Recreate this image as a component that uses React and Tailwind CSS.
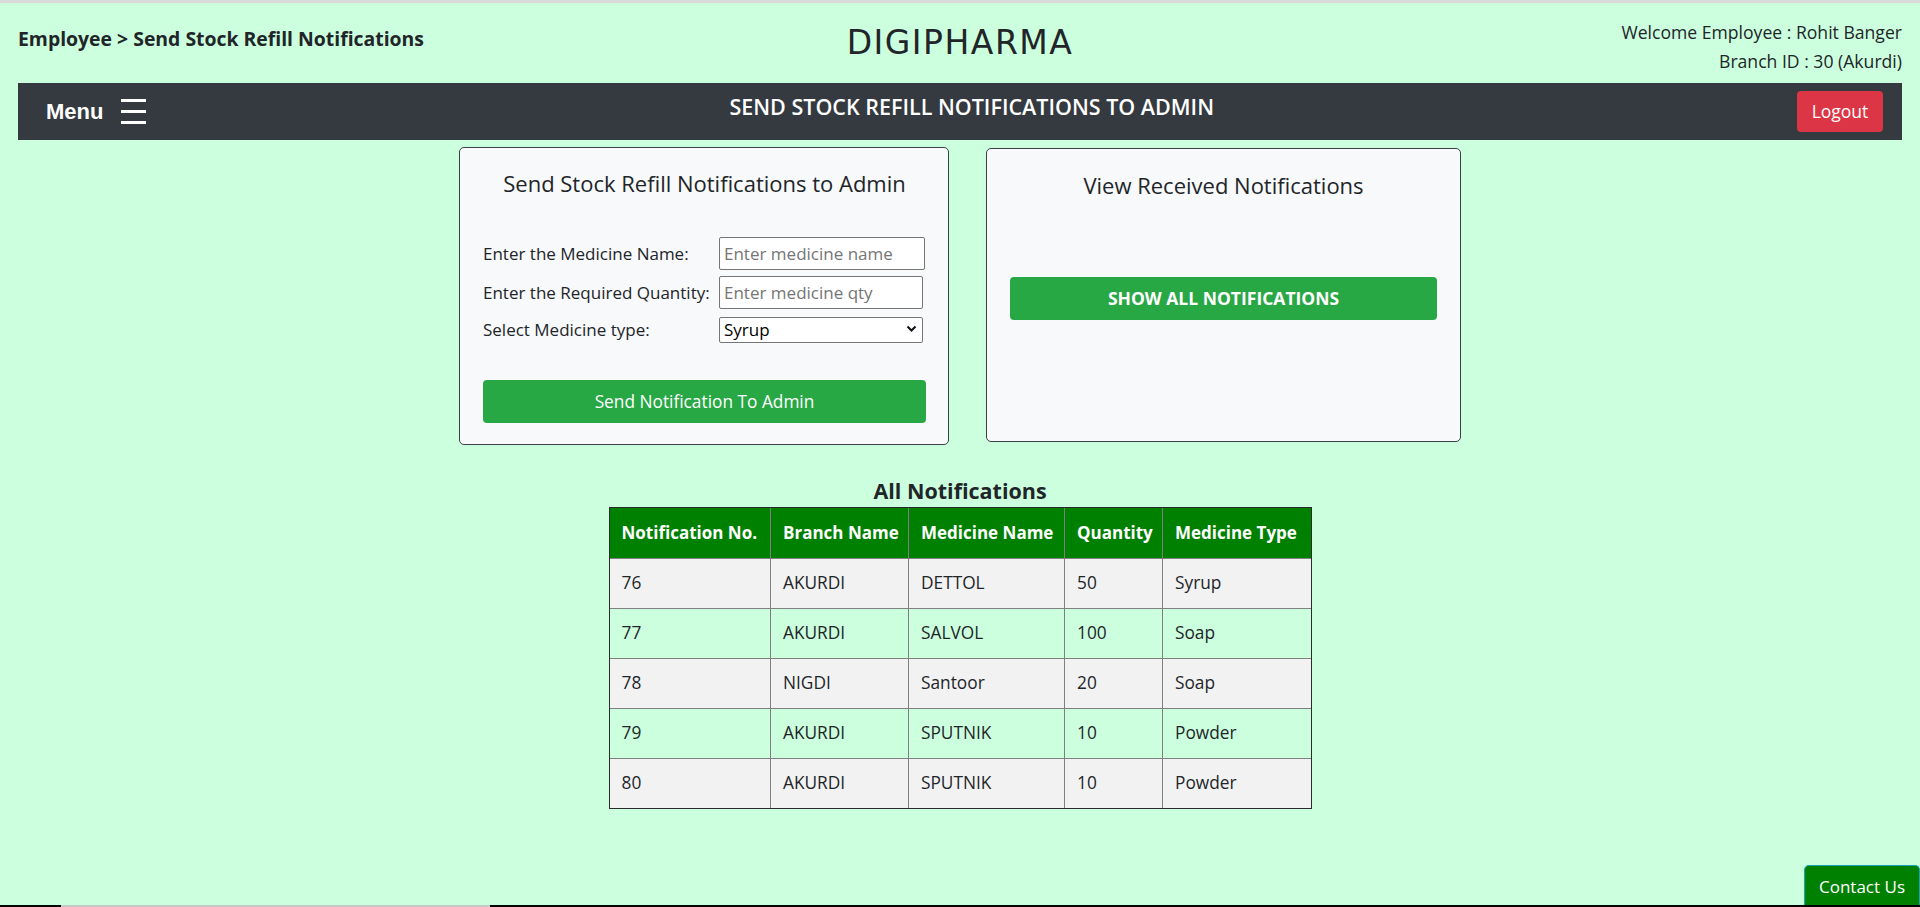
import { useState } from "react";

const rows = [
  { no: 76, branch: "AKURDI", med: "DETTOL", qty: 50, type: "Syrup" },
  { no: 77, branch: "AKURDI", med: "SALVOL", qty: 100, type: "Soap" },
  { no: 78, branch: "NIGDI", med: "Santoor", qty: 20, type: "Soap" },
  { no: 79, branch: "AKURDI", med: "SPUTNIK", qty: 10, type: "Powder" },
  { no: 80, branch: "AKURDI", med: "SPUTNIK", qty: 10, type: "Powder" },
];

const cols = [
  { label: "Notification No.", w: "w-[161px]" },
  { label: "Branch Name", w: "w-[138px]" },
  { label: "Medicine Name", w: "w-[156px]" },
  { label: "Quantity", w: "w-[98px]" },
  { label: "Medicine Type", w: "w-[148px]" },
];

export default function App() {
  const [type, setType] = useState("Syrup");

  return (
    <div className="min-h-screen bg-[#ccffdd] text-[#212529] font-['Open_Sans',sans-serif]">
      <div className="h-[3px] bg-[#d9d9d9]" />

      {/* header */}
      <div className="grid grid-cols-3 h-[80px] px-[18px]">
        <div className="pt-[22px] text-[19.4px] leading-[28px] font-bold whitespace-nowrap">
          Employee &gt; Send Stock Refill Notifications
        </div>
        <div className="pt-[20px] text-center text-[33px] leading-[40px] font-['DejaVu_Sans',sans-serif] tracking-[1.5px]">
          DIGIPHARMA
        </div>
        <div className="pt-[15px] text-right text-[17.6px] leading-[29px]">
          <div>Welcome Employee : Rohit Banger</div>
          <div>Branch ID : 30 (Akurdi)</div>
        </div>
      </div>

      {/* nav */}
      <div className="mx-[18px] h-[57px] bg-[#343a40] flex items-center justify-between pl-[28px] pr-[19px]">
        <div className="flex items-center gap-[18px]">
          <span className="text-white text-[22px] font-bold font-['Liberation_Sans',sans-serif]">Menu</span>
          <div className="flex flex-col gap-[8px]">
            <div className="h-[3px] w-[25px] bg-white" />
            <div className="h-[3px] w-[25px] bg-white" />
            <div className="h-[3px] w-[25px] bg-white" />
          </div>
        </div>
        <div className="text-white text-[21.5px] font-semibold pb-[8px]">SEND STOCK REFILL NOTIFICATIONS TO ADMIN</div>
        <button className="h-[41px] w-[86px] rounded-[4px] bg-[#dc3545] text-white text-[17.5px]">Logout</button>
      </div>

      {/* cards */}
      <div className="flex justify-center items-start gap-[37px] mt-[7px]">
        <div className="w-[490px] border border-[#3a3f44] rounded-[5px] bg-[#f8f9fa] pt-[21px] pb-[21px] pl-[23px] pr-[22px]">
          <h5 className="text-center text-[22px] leading-[29px] font-medium whitespace-nowrap">Send Stock Refill Notifications to Admin</h5>
          <div className="mt-[39px] text-[17px]">
            <div className="flex items-center h-[33px]">
              <label className="w-[236px]">Enter the Medicine Name:</label>
              <input
                className="w-[206px] h-[33px] border border-[#767676] rounded-[2px] bg-white px-[4px] placeholder:text-[#757575] outline-none"
                placeholder="Enter medicine name"
              />
            </div>
            <div className="flex items-center h-[33px] mt-[6px]">
              <label className="w-[236px]">Enter the Required Quantity:</label>
              <input
                className="w-[204px] h-[33px] border border-[#767676] rounded-[2px] bg-white px-[4px] placeholder:text-[#757575] outline-none"
                placeholder="Enter medicine qty"
              />
            </div>
            <div className="flex items-center h-[26px] mt-[8px]">
              <label className="w-[236px]">Select Medicine type:</label>
              <div className="relative w-[204px] h-[26px]">
                <select
                  value={type}
                  onChange={(e) => setType(e.target.value)}
                  className="appearance-none w-full h-full border border-[#767676] rounded-[2px] bg-white pl-[4px] text-black leading-[24px] outline-none"
                >
                  <option>Syrup</option>
                  <option>Soap</option>
                  <option>Powder</option>
                  <option>Tablet</option>
                </select>
                <svg className="absolute right-[6px] top-[8px] pointer-events-none" width="11" height="8" viewBox="0 0 11 8">
                  <path d="M1.5 1.5 L5.5 5.5 L9.5 1.5" fill="none" stroke="#111" strokeWidth="2" />
                </svg>
              </div>
            </div>
          </div>
          <button className="mt-[37px] w-full h-[43px] rounded-[4px] bg-[#28a745] text-white text-[17.3px]">
            Send Notification To Admin
          </button>
        </div>

        <div className="w-[475px] h-[294px] mt-[1px] border border-[#3a3f44] rounded-[5px] bg-[#f8f9fa] pt-[22px] px-[23px]">
          <h5 className="text-center text-[22px] leading-[29px] font-medium">View Received Notifications</h5>
          <button className="mt-[77px] w-full h-[43px] rounded-[4px] bg-[#28a745] text-white text-[17.5px] font-bold">
            SHOW ALL NOTIFICATIONS
          </button>
        </div>
      </div>

      {/* table */}
      <div className="mt-[31px] flex flex-col items-center">
        <h5 className="text-[21.5px] leading-[29px] font-bold">All Notifications</h5>
        <div className="mt-[2px] border border-[#2b2b2b]">
          <table className="table-fixed border-collapse text-[17.3px] text-left">
            <thead>
              <tr className="bg-[#008000] text-white h-[50px]">
                {cols.map((c) => (
                  <th
                    key={c.label}
                    className={`${c.w} pl-[12px] pr-[2px] text-[17px] font-bold whitespace-nowrap border-l border-[#808080] first:border-l-0`}
                  >
                    {c.label}
                  </th>
                ))}
              </tr>
            </thead>
            <tbody>
              {rows.map((r, i) => (
                <tr key={r.no} className={`h-[50px] border-t border-[#808080] ${i % 2 === 0 ? "bg-[#f2f2f2]" : ""}`}>
                  <td className="pl-[12px] border-l border-[#808080] first:border-l-0">{r.no}</td>
                  <td className="pl-[12px] border-l border-[#808080]">{r.branch}</td>
                  <td className="pl-[12px] border-l border-[#808080]">{r.med}</td>
                  <td className="pl-[12px] border-l border-[#808080]">{r.qty}</td>
                  <td className="pl-[12px] border-l border-[#808080]">{r.type}</td>
                </tr>
              ))}
            </tbody>
          </table>
        </div>
      </div>

      <button className="fixed right-0 bottom-0 w-[116px] h-[42px] bg-[#008000] border border-[#17a2b8] border-b-0 rounded-t-[5px] text-white text-[17px]">
        Contact Us
      </button>
      <div className="fixed left-0 right-0 bottom-0 h-[2px] bg-black">
        <div className="ml-[61px] w-[429px] h-full bg-[#c8c8c8]" />
      </div>
    </div>
  );
}
